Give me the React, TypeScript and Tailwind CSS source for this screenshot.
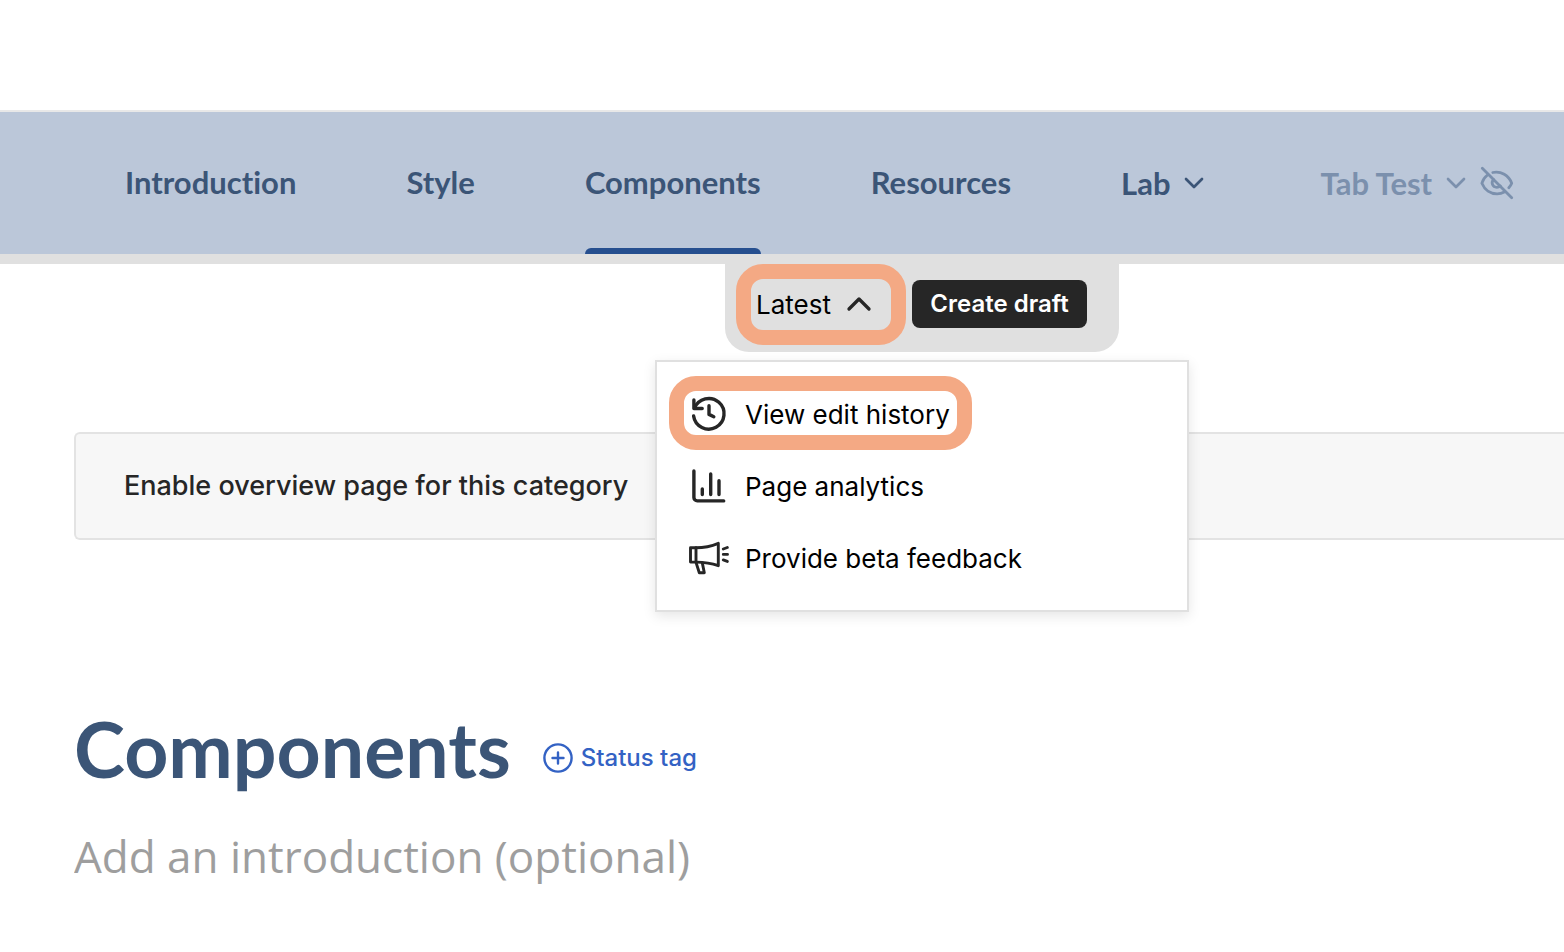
import { useState } from 'react';
import { ChevronDown, ChevronUp } from 'lucide-react';

const HistoryIcon = () => (
    <svg className="w-10 h-10 shrink-0" viewBox="0 0 40 40" fill="none" stroke="#262626" strokeWidth="3.4" strokeLinecap="round" strokeLinejoin="round" aria-hidden="true">
        <path d="M4.6 22A15.3 15.3 0 1 0 5.5 14.2" />
        <path d="M4.9 6v8.5h8.3" />
        <path d="M20 11.8v8.6l4.8 2.3" />
    </svg>
);

const ChartIcon = () => (
    <svg className="w-10 h-10 shrink-0" viewBox="0 0 40 40" fill="none" stroke="#262626" strokeWidth="3.4" strokeLinecap="round" strokeLinejoin="round" aria-hidden="true">
        <path d="M4.9 5v26.5a3.4 3.4 0 0 0 3.4 3.4h26.4" />
        <path d="M13.3 23v5.6M21.7 8v20.6M30 14.7v13.9" />
    </svg>
);

const MegaphoneIcon = () => (
    <svg className="w-10 h-10 shrink-0" viewBox="0 0 40 40" fill="none" stroke="#262626" strokeWidth="2.9" strokeLinecap="round" strokeLinejoin="round" aria-hidden="true">
        <path d="M1.5 9.7H7v14.4H1.5z" />
        <path d="M7 9.7c8.5 0 15.5-1.6 22.3-4.4v22.4C22.5 25.2 15.5 24.1 7 24.1" />
        <path d="M7 24.4l3.3 10.3h5l-2-9.8" />
        <path d="M34.3 11l4-1.5M34.3 16.4h4.2M34.3 21.9l4 1.5" />
    </svg>
);

const HiddenIcon = () => (
    <svg className="w-[34px] h-[34px] shrink-0" viewBox="0 0 34 34" fill="none" stroke="currentColor" strokeWidth="2.8" strokeLinecap="round" strokeLinejoin="round" aria-hidden="true">
        <path d="M2.3 2.3l29.4 29.4" />
        <path d="M7.5 9C4.7 11.2 2.6 14.2 1.9 17.2c2.7 6.6 8.6 10.6 15.2 10.6 2.7 0 5-.6 7.2-1.8" />
        <path d="M12.8 6.5c8.3-1.7 15.9 3 18.9 10.7-.7 1.7-1.6 3.2-2.9 4.6" />
        <path d="M13.6 13.5c-3 3.2-1 7.7 3.2 7.8 1.4 0 2.5-.4 3.5-1.3" />
    </svg>
);

const AddIcon = () => (
    <svg className="w-[30px] h-[30px] shrink-0" viewBox="0 0 30 30" fill="none" stroke="currentColor" strokeWidth="2.4" strokeLinecap="round" aria-hidden="true">
        <circle cx="15" cy="15" r="13.6" />
        <path d="M15 9.5v11M9.5 15h11" />
    </svg>
);

const links = ['Introduction', 'Style', 'Components', 'Resources'];

const menuItems = [
    { label: 'View edit history', Icon: HistoryIcon },
    { label: 'Page analytics', Icon: ChartIcon },
    { label: 'Provide beta feedback', Icon: MegaphoneIcon },
];

export default function App() {
    const [active, setActive] = useState('Components');
    const [open, setOpen] = useState(true);
    const [intro, setIntro] = useState('');

    return (
        <div className="min-h-screen overflow-x-hidden bg-white pt-[110px] font-['Inter',sans-serif]">
            <header className="border-t-2 border-[#e8e8e8] border-b-[10px] border-b-[#e0e0e0] bg-[#bbc7d9]">
                <nav className="flex h-[142px] gap-[110px] pl-[125px] font-['Lato',sans-serif] text-[31px] font-bold whitespace-nowrap text-[#3b5577] [font-variant-ligatures:none]">
                    {links.map(l => (
                        <a
                            key={l}
                            href={`#${l.toLowerCase()}`}
                            onClick={() => setActive(l)}
                            className="flex flex-col"
                        >
                            <span className="flex flex-1 items-center pt-1">{l}</span>
                            <span className={`h-1.5 rounded-t-md ${active === l ? 'bg-[#264f8f]' : ''}`} />
                        </a>
                    ))}
                    <button type="button" className="flex items-center gap-2">
                        Lab <ChevronDown className="w-8 h-8" />
                    </button>
                    <button type="button" className="flex items-center gap-2 text-[#7b90ad]">
                        Tab Test <ChevronDown className="w-8 h-8" />
                        <HiddenIcon />
                    </button>
                </nav>
            </header>

            <div className="relative z-10 ml-[725px] flex h-[88px] w-[394px] items-start rounded-b-3xl bg-[#e0e0e0] pl-[11px]">
                <div className="relative flex h-20 w-[170px] items-center pl-5">
                    <button
                        type="button"
                        aria-expanded={open}
                        onClick={() => setOpen(!open)}
                        className="flex items-center gap-2 text-[26px] text-black"
                    >
                        Latest <ChevronUp className="w-10 h-10 text-[#262626]" />
                    </button>
                    <span className="pointer-events-none absolute inset-x-0 top-0 h-[81px] rounded-[27px] border-[15px] border-[#f4a984]" />
                </div>
                <button type="button" className="mt-4 ml-1.5 h-12 w-[175px] rounded-lg bg-[#262626] text-2xl font-semibold text-white">
                    Create draft
                </button>

                {open && (
                    <ul className="absolute top-24 -left-[70px] w-[534px] border-2 border-[#e0e0e0] bg-white py-4 shadow-[0_4px_12px_rgba(0,0,0,0.1)]">
                        {menuItems.map(({ label, Icon }, i) => (
                            <li key={label} className="relative">
                                <button type="button" className="flex h-[72px] w-full items-center gap-4 pl-8 text-[26px] text-black">
                                    <Icon /> {label}
                                </button>
                                {i === 0 && (
                                    <span className="pointer-events-none absolute -top-0.5 left-3 h-[74px] w-[303px] rounded-[27px] border-[15px] border-[#f4a984]" />
                                )}
                            </li>
                        ))}
                    </ul>
                )}
            </div>

            <main className="pl-[74px]">
                <section className="mt-20 flex h-[108px] items-center rounded-l-md border-2 border-r-0 border-[#e3e3e3] bg-[#f7f7f7] pl-12">
                    <p className="text-[27px] font-medium text-[#262626]">Enable overview page for this category</p>
                </section>

                <div className="mt-40 flex items-center gap-8">
                    <h1 className="font-['Lato',sans-serif] text-[77px] leading-24 font-bold text-[#3b5577]">Components</h1>
                    <button type="button" className="mt-5 flex items-center gap-2 text-2xl font-medium text-[#3362c4]">
                        <AddIcon /> Status tag
                    </button>
                </div>

                <input
                    type="text"
                    aria-label="Introduction"
                    placeholder="Add an introduction (optional)"
                    value={intro}
                    onChange={e => setIntro(e.target.value)}
                    className="mt-7 h-16 w-full bg-transparent font-['Open_Sans',sans-serif] text-[44px] text-[#3b5577] outline-none placeholder:text-[#9e9e9e]"
                />
            </main>
        </div>
    );
}
